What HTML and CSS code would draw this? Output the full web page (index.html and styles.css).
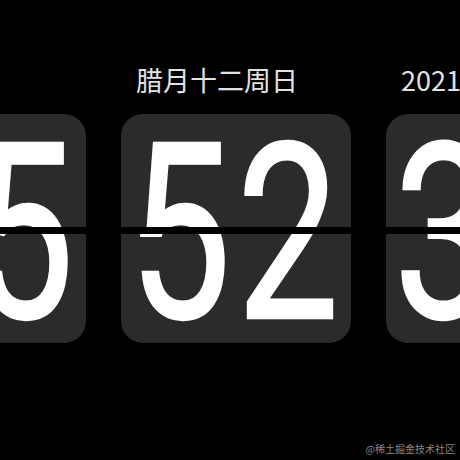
FILE: index.html
```html
<!DOCTYPE html>
<html lang="zh-CN">
<head>
<meta charset="utf-8">
<title>Flip Clock</title>
<link rel="stylesheet" href="styles.css">
</head>
<body>
<div class="screen">
  <div class="clock">
    <div class="unit">
      <div class="label">下午</div>
      <div class="card">
        <div class="digits"><span class="digit">1</span><span class="digit">5</span></div>
        <div class="split"></div>
      </div>
    </div>
    <div class="unit">
      <div class="label">腊月十二周日</div>
      <div class="card">
        <div class="digits"><span class="digit">5</span><span class="digit">2</span></div>
        <span class="leaf"></span>
        <div class="split"></div>
      </div>
    </div>
    <div class="unit">
      <div class="label">2021</div>
      <div class="card">
        <div class="digits"><span class="digit">3</span><span class="digit">0</span></div>
        <div class="split"></div>
      </div>
    </div>
  </div>
  <div class="watermark">@稀土掘金技术社区</div>
</div>
</body>
</html>
```
FILE: styles.css
```css
html, body {
  margin: 0;
  padding: 0;
  background: #000;
}
.screen {
  position: relative;
  width: 460px;
  height: 460px;
  overflow: hidden;
  background: #000;
}
.clock {
  display: flex;
  gap: 35px;
  margin-left: -144px;
  padding-top: 66px;
}
.unit {
  flex: 0 0 230px;
  width: 230px;
}
.label {
  padding-left: 15px;
  height: 27px;
  line-height: 27px;
  margin-bottom: 21px;
  font-family: "Noto Sans CJK SC", sans-serif;
  font-size: 27px;
  color: #e2e2e2;
  white-space: nowrap;
}
.card {
  position: relative;
  height: 229px;
  border-radius: 22px;
  background: #2b2b2b;
  overflow: hidden;
}
.digits {
  display: flex;
  justify-content: center;
  margin-top: -3px;
  margin-left: -26px;
}
.digit {
  display: block;
  width: 108px;
  text-align: center;
  font-family: Roboto, sans-serif;
  font-weight: 400;
  font-size: 245px;
  line-height: 248px;
  color: #fff;
  -webkit-text-stroke: 2.5px #fff;
  transform: scaleX(0.74);
}
.split {
  position: absolute;
  left: 0;
  right: 0;
  top: 113px;
  height: 7px;
  background: #000;
}
.leaf {
  position: absolute;
  left: 19px;
  top: 120px;
  width: 22px;
  height: 3px;
  border-radius: 1px;
  background: #fff;
}
.watermark {
  position: absolute;
  right: 5px;
  bottom: 5px;
  font-family: "Noto Sans CJK SC", sans-serif;
  font-size: 10px;
  line-height: 12px;
  color: #8a8a8a;
}
```
